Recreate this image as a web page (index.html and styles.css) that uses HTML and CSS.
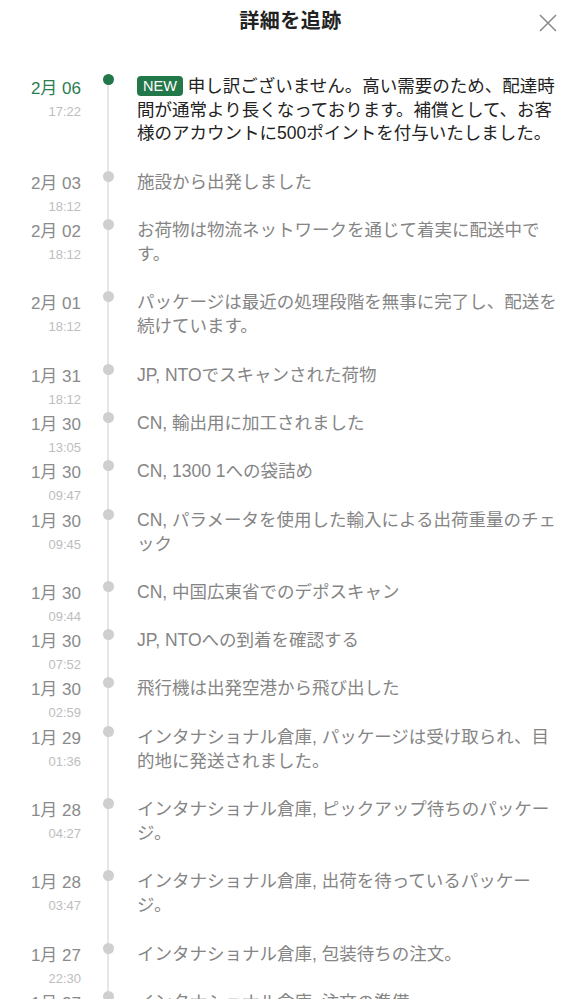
FILE: index.html
```html
<!DOCTYPE html>
<html lang="ja">
<head>
<meta charset="utf-8">
<title>詳細を追跡</title>
<link rel="stylesheet" href="styles.css">
</head>
<body>
<div class="sheet">
  <header class="header">
    <h1 class="title">詳細を追跡</h1>
    <button class="close" aria-label="閉じる">
      <svg width="20" height="20" viewBox="0 0 20 20"><path d="M2 2 L18 18 M18 2 L2 18" stroke="#8c8c8c" stroke-width="1.6" fill="none"/></svg>
    </button>
  </header>
  <ol class="timeline">
    <li class="item current">
      <div class="when"><div class="date">2月 06</div><div class="time">17:22</div></div>
      <div class="mark"><span class="dot"></span></div>
      <div class="desc"><span class="badge">NEW</span> 申し訳ございません。高い需要のため、配達時間が通常より長くなっております。補償として、お客様のアカウントに500ポイントを付与いたしました。</div>
    </li>
    <li class="item">
      <div class="when"><div class="date">2月 03</div><div class="time">18:12</div></div>
      <div class="mark"><span class="dot"></span></div>
      <div class="desc">施設から出発しました</div>
    </li>
    <li class="item">
      <div class="when"><div class="date">2月 02</div><div class="time">18:12</div></div>
      <div class="mark"><span class="dot"></span></div>
      <div class="desc">お荷物は物流ネットワークを通じて着実に配送中です。</div>
    </li>
    <li class="item">
      <div class="when"><div class="date">2月 01</div><div class="time">18:12</div></div>
      <div class="mark"><span class="dot"></span></div>
      <div class="desc">パッケージは最近の処理段階を無事に完了し、配送を続けています。</div>
    </li>
    <li class="item">
      <div class="when"><div class="date">1月 31</div><div class="time">18:12</div></div>
      <div class="mark"><span class="dot"></span></div>
      <div class="desc">JP, NTOでスキャンされた荷物</div>
    </li>
    <li class="item">
      <div class="when"><div class="date">1月 30</div><div class="time">13:05</div></div>
      <div class="mark"><span class="dot"></span></div>
      <div class="desc">CN, 輸出用に加工されました</div>
    </li>
    <li class="item">
      <div class="when"><div class="date">1月 30</div><div class="time">09:47</div></div>
      <div class="mark"><span class="dot"></span></div>
      <div class="desc">CN, 1300 1への袋詰め</div>
    </li>
    <li class="item">
      <div class="when"><div class="date">1月 30</div><div class="time">09:45</div></div>
      <div class="mark"><span class="dot"></span></div>
      <div class="desc">CN, パラメータを使用した輸入による出荷重量のチェック</div>
    </li>
    <li class="item">
      <div class="when"><div class="date">1月 30</div><div class="time">09:44</div></div>
      <div class="mark"><span class="dot"></span></div>
      <div class="desc">CN, 中国広東省でのデポスキャン</div>
    </li>
    <li class="item">
      <div class="when"><div class="date">1月 30</div><div class="time">07:52</div></div>
      <div class="mark"><span class="dot"></span></div>
      <div class="desc">JP, NTOへの到着を確認する</div>
    </li>
    <li class="item">
      <div class="when"><div class="date">1月 30</div><div class="time">02:59</div></div>
      <div class="mark"><span class="dot"></span></div>
      <div class="desc">飛行機は出発空港から飛び出した</div>
    </li>
    <li class="item">
      <div class="when"><div class="date">1月 29</div><div class="time">01:36</div></div>
      <div class="mark"><span class="dot"></span></div>
      <div class="desc">インタナショナル倉庫, パッケージは受け取られ、目的地に発送されました。</div>
    </li>
    <li class="item">
      <div class="when"><div class="date">1月 28</div><div class="time">04:27</div></div>
      <div class="mark"><span class="dot"></span></div>
      <div class="desc">インタナショナル倉庫, ピックアップ待ちのパッケージ。</div>
    </li>
    <li class="item">
      <div class="when"><div class="date">1月 28</div><div class="time">03:47</div></div>
      <div class="mark"><span class="dot"></span></div>
      <div class="desc">インタナショナル倉庫, 出荷を待っているパッケージ。</div>
    </li>
    <li class="item">
      <div class="when"><div class="date">1月 27</div><div class="time">22:30</div></div>
      <div class="mark"><span class="dot"></span></div>
      <div class="desc">インタナショナル倉庫, 包装待ちの注文。</div>
    </li>
    <li class="item">
      <div class="when"><div class="date">1月 27</div><div class="time">22:10</div></div>
      <div class="mark"><span class="dot"></span></div>
      <div class="desc">インタナショナル倉庫, 注文の準備</div>
    </li>
  </ol>
</div>
</body>
</html>
```

FILE: styles.css
```css
html, body {
  margin: 0;
  padding: 0;
  background: #ffffff;
}
body {
  font-family: "Liberation Sans", "Noto Sans CJK JP", sans-serif;
  color: #888888;
  overflow: hidden;
}
.sheet {
  width: 581px;
  height: 999px;
  overflow: hidden;
}
.header {
  position: relative;
  height: 42px;
  display: flex;
  align-items: center;
  justify-content: center;
}
.title {
  margin: 0;
  font-size: 20px;
  font-weight: 700;
  color: #222222;
  line-height: 42px;
  letter-spacing: 0.5px;
}
.close {
  position: absolute;
  right: 22px;
  top: 12px;
  width: 22px;
  height: 22px;
  padding: 0;
  border: 0;
  background: transparent;
  display: flex;
  align-items: center;
  justify-content: center;
}
.timeline {
  list-style: none;
  margin: 33px 0 0 0;
  padding: 0;
}
.item {
  display: grid;
  grid-template-columns: 81px 56px 425px;
  align-items: start;
  padding-bottom: 24.3px;
}
.when {
  text-align: right;
  padding-top: 2px;
  margin-bottom: -23px;
}
.date {
  font-size: 17px;
  line-height: 24px;
  color: #8a8a8a;
}
.time {
  font-size: 13px;
  line-height: 18px;
  margin-top: 2px;
  color: #bdbdbd;
}
.mark {
  position: relative;
  align-self: stretch;
}
.mark::before {
  content: "";
  position: absolute;
  left: 26px;
  top: 0;
  bottom: -25px;
  width: 2px;
  background: #e6e6e6;
}
.current .mark::before {
  top: 6px;
}
.dot {
  position: relative;
  display: block;
  width: 11px;
  height: 11px;
  margin: 1px 0 0 21.5px;
  border-radius: 50%;
  background: #cfcfcf;
}
.current .dot {
  background: #23784a;
  margin-top: -1px;
}
.desc {
  font-size: 17.5px;
  line-height: 24px;
  color: #858585;
}
.current .desc {
  color: #222222;
  line-height: 23.5px;
}
.current .date {
  color: #2a7d4f;
}
.badge {
  display: inline-block;
  background: #23784a;
  color: #ffffff;
  font-size: 14.5px;
  line-height: 20px;
  padding: 0 6px;
  border-radius: 4px;
  vertical-align: 1px;
}
```
